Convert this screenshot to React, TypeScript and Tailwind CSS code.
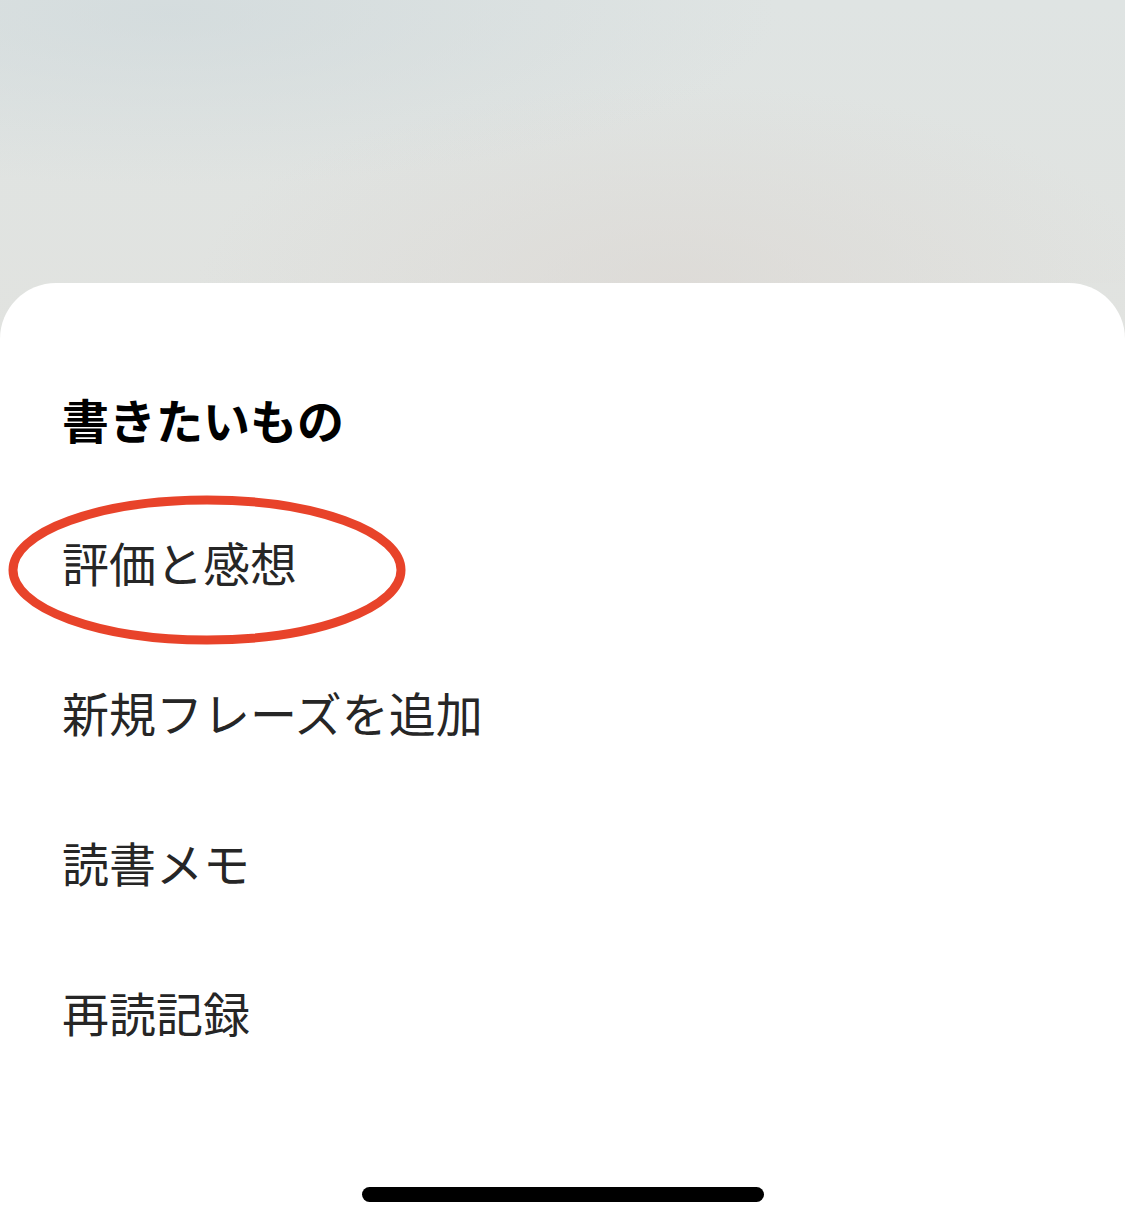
const items = ['評価と感想', '新規フレーズを追加', '読書メモ', '再読記録'];

function Circle() {
  return (
    <svg
      className="absolute left-[3px] top-[8px] pointer-events-none"
      width="408"
      height="154"
      viewBox="0 0 408 154"
    >
      <ellipse cx="204" cy="76" rx="194" ry="70" fill="none" stroke="#e8432a" strokeWidth="9" />
    </svg>
  );
}

export default function App() {
  return (
    <div
      className="w-[1125px] h-[1226px] flex flex-col overflow-hidden bg-[linear-gradient(180deg,#dfe4e3_0%,#e2e2de_40%,#e1deda_100%)]"
      style={{ fontFamily: '"Noto Sans CJK JP", "Noto Sans", sans-serif' }}
    >
      <div className="h-[283px] shrink-0 bg-[radial-gradient(ellipse_at_15%_5%,rgba(205,215,218,0.6),transparent_45%),radial-gradient(ellipse_at_60%_100%,rgba(220,216,212,0.7),transparent_50%)]" />

      <div className="flex-1 flex flex-col bg-white rounded-t-[56px] pt-[88px] pb-[24px]">
        <div className="h-[94px] flex items-center px-[62px]">
          <h2 className="text-[47px] leading-none font-bold text-black">書きたいもの</h2>
        </div>

        <ul className="mt-[21px] flex flex-col">
          {items.map((label, i) => (
            <li key={label} className="relative h-[150px] flex items-center px-[62px]">
              {i === 0 && <Circle />}
              <span className="text-[47px] leading-none text-[#262626]">{label}</span>
            </li>
          ))}
        </ul>

        <div className="mt-auto flex justify-center">
          <div className="w-[402px] h-[15px] rounded-full bg-black" />
        </div>
      </div>
    </div>
  );
}
